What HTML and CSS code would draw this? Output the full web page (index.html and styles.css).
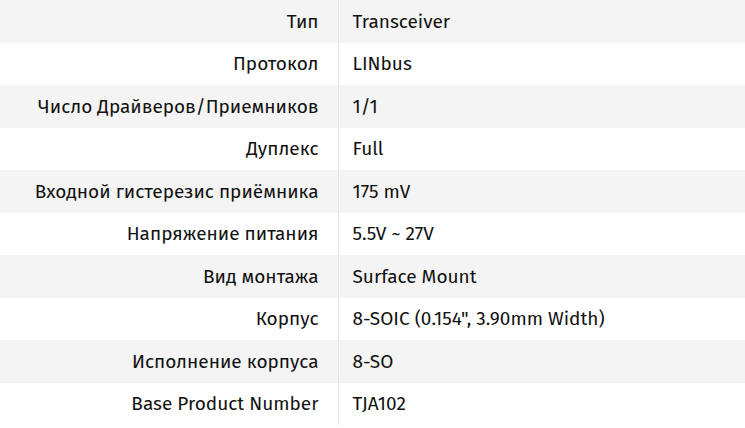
FILE: index.html
```html
<!DOCTYPE html>
<html lang="ru">
<head>
<meta charset="utf-8">
<link rel="stylesheet" href="styles.css">
</head>
<body>
<table class="specs">
  <tbody>
    <tr><th>Тип</th><td>Transceiver</td></tr>
    <tr><th>Протокол</th><td>LINbus</td></tr>
    <tr><th>Число Драйверов/Приемников</th><td>1/1</td></tr>
    <tr><th>Дуплекс</th><td>Full</td></tr>
    <tr><th>Входной гистерезис приёмника</th><td>175 mV</td></tr>
    <tr><th>Напряжение питания</th><td>5.5V ~ 27V</td></tr>
    <tr><th>Вид монтажа</th><td>Surface Mount</td></tr>
    <tr><th>Корпус</th><td>8-SOIC (0.154", 3.90mm Width)</td></tr>
    <tr><th>Исполнение корпуса</th><td>8-SO</td></tr>
    <tr><th>Base Product Number</th><td>TJA102</td></tr>
  </tbody>
</table>
</body>
</html>
```
FILE: styles.css
```css
html, body {
  margin: 0;
  padding: 0;
  background: #ffffff;
}
body {
  font-family: "Fira Sans", "Open Sans", "Noto Sans", sans-serif;
  font-size: 19px;
  color: #111111;
}
.specs {
  width: 745px;
  border-collapse: collapse;
  border-spacing: 0;
}
.specs tr {
  height: 42.5px;
}
.specs tr:nth-child(odd) {
  background: #f4f4f4;
}
.specs th {
  width: 338px;
  box-sizing: border-box;
  padding: 0 19px 0 0;
  text-align: right;
  font-weight: 400;
  border-right: 1px solid #e4e4e4;
  white-space: nowrap;
}
.specs td {
  padding: 0 0 0 14px;
  text-align: left;
  white-space: nowrap;
}
```
